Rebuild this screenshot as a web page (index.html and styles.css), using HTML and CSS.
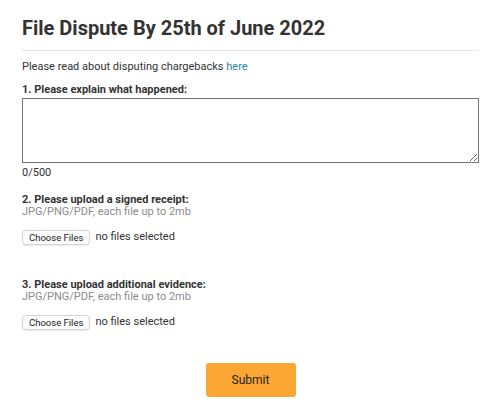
FILE: index.html
```html
<!DOCTYPE html>
<html>
<head>
<meta charset="utf-8">
<link rel="stylesheet" href="styles.css">
</head>
<body>
<div class="page">
  <h1 class="title">File Dispute By 25th of June 2022</h1>
  <hr class="divider">
  <p class="intro">Please read about disputing chargebacks <a href="#" class="link">here</a></p>

  <label class="label label-first">1. Please explain what happened:</label>
  <textarea class="textarea"></textarea>
  <div class="counter">0/500</div>

  <label class="label label-second">2. Please upload a signed receipt:</label>
  <div class="hint">JPG/PNG/PDF, each file up to 2mb</div>
  <div class="file-row">
    <span class="file-btn">Choose Files</span>
    <span class="file-status">no files selected</span>
  </div>

  <label class="label label-third">3. Please upload additional evidence:</label>
  <div class="hint">JPG/PNG/PDF, each file up to 2mb</div>
  <div class="file-row">
    <span class="file-btn">Choose Files</span>
    <span class="file-status">no files selected</span>
  </div>

  <div class="actions">
    <button class="submit">Submit</button>
  </div>
</div>
</body>
</html>
```

FILE: styles.css
```css
* { box-sizing: border-box; }
html, body { margin: 0; padding: 0; background: #fff; }
body {
  font-family: Roboto, "Liberation Sans", sans-serif;
  color: #333;
  font-size: 11px;
  line-height: 12px;
}
.page {
  padding: 16px 22px 0;
  display: flex;
  flex-direction: column;
}
.title {
  margin: 0;
  font-size: 20px;
  line-height: 24px;
  font-weight: 700;
  color: #333;
}
.divider {
  margin: 10px 0 0;
  border: 0;
  height: 1px;
  background: #e6e6e6;
}
.intro {
  margin: 9.5px 0 0;
}
.link { color: #2a8aa5; text-decoration: none; }
.label {
  display: block;
  font-weight: 700;
  color: #333;
}
.label-first { margin-top: 11px; }
.textarea {
  display: block;
  margin-top: 2px;
  width: 100%;
  height: 65px;
  border: 1px solid #767676;
  border-radius: 0;
  padding: 2px;
  font-family: inherit;
  resize: both;
}
.counter { margin-top: 4px; }
.label-second { margin-top: 15px; }
.label-third { margin-top: 34px; }
.hint { color: #8c8c8c; }
.file-row {
  display: flex;
  align-items: center;
  gap: 5px;
  margin-top: 12px;
}
.file-btn {
  display: inline-block;
  font-size: 9.5px;
  line-height: 11px;
  padding: 1px 6px;
  border: 1px solid #d4d4d4;
  border-radius: 4px;
  background: #fdfdfd;
  box-shadow: 0 1px 1px rgba(0,0,0,0.08);
  color: #222;
}
.file-status { color: #333; }
.actions {
  display: flex;
  justify-content: center;
  margin-top: 33px;
}
.submit {
  width: 90px;
  height: 34px;
  border: 0;
  border-radius: 3px;
  background: #fca734;
  color: #222;
  font-family: inherit;
  font-size: 12px;
}
```
